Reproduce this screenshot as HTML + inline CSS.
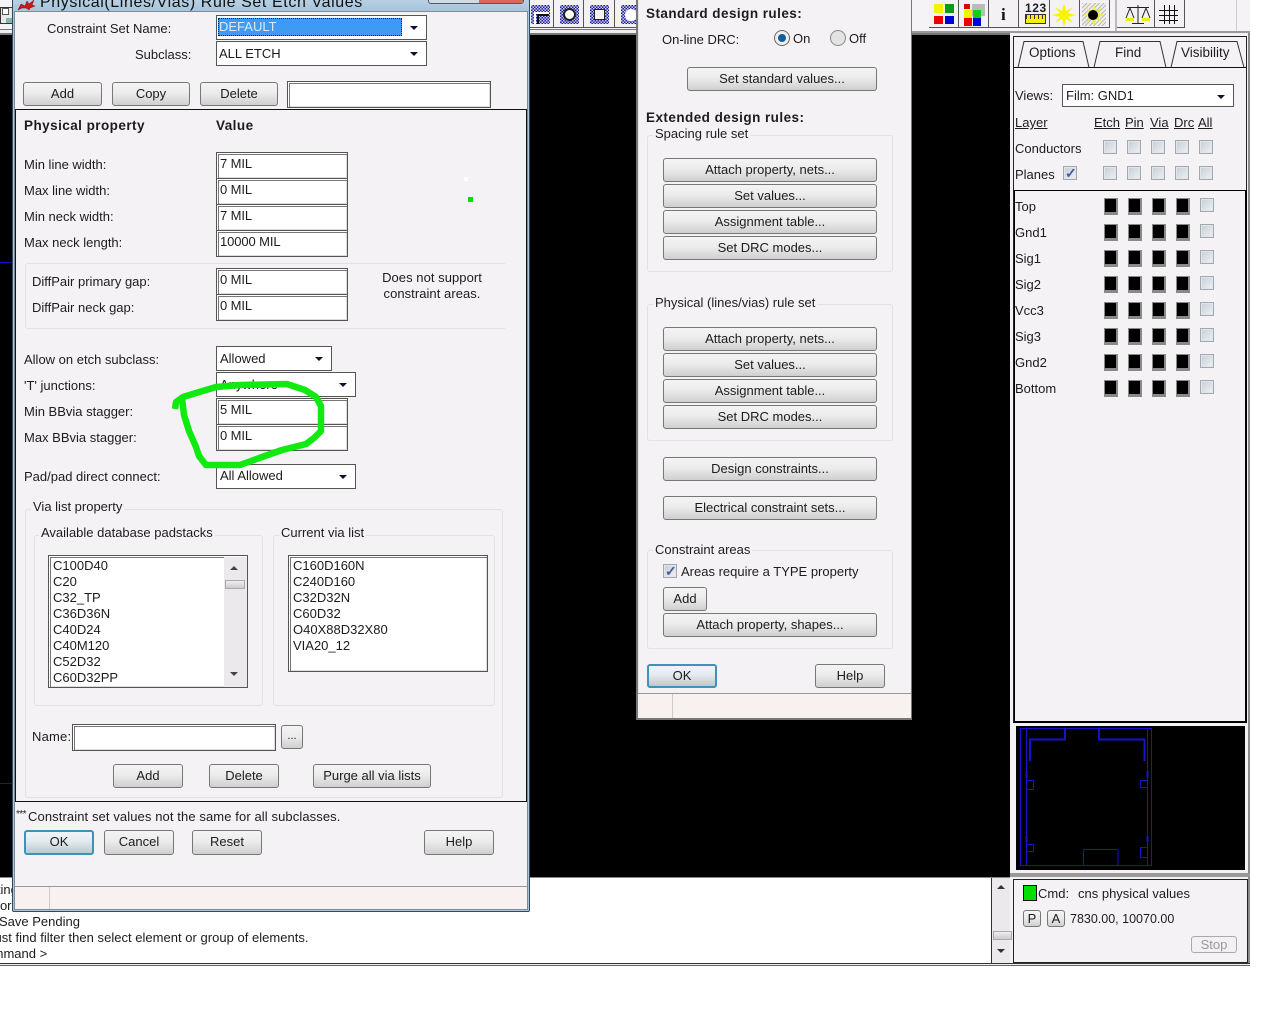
<!DOCTYPE html>
<html><head><meta charset="utf-8"><style>
*{box-sizing:border-box}
html,body{margin:0;padding:0;background:#fff}
body{width:1280px;height:1024px;overflow:hidden;position:relative;font:13px/16px "Liberation Sans",sans-serif;color:#1c1c1c}
div{position:absolute}
.t{white-space:nowrap;height:16px;margin-top:1px}
.bd{font-weight:bold;font-size:13.5px;letter-spacing:.45px}
.b{background:linear-gradient(#f4f4f4 0,#ececec 45%,#cfcfcf 100%);border:1px solid #777;border-radius:3px;text-align:center;line-height:21px;white-space:nowrap}
.ok{border:2px solid #3f93b8;line-height:19px;background:linear-gradient(#eef4f7 0,#e4eaee 45%,#bcc7cc 100%)}
.f{background:#fff;border:1px solid #555;box-shadow:inset 1px 1px 0 #fff,inset 2px 2px 0 #777,inset -1px -1px 0 #ddd;padding:2px 0 0 3px;line-height:18px;white-space:nowrap;letter-spacing:-.1px}
.c{background:#fff;border:1px solid #555;padding:2px 0 0 3px;line-height:18px;white-space:nowrap}
.c:after{content:"";position:absolute;right:8px;top:10px;border:4px solid transparent;border-top:4px solid #101030;border-bottom:0}
.g{border:1px solid #e3e1e5;border-radius:3px}
.l{background:#f5f2f6;padding:0 2px;white-space:nowrap;height:16px}
.k{width:14px;height:14px;background:linear-gradient(135deg,#c4cdd6,#eef2f6);border:1px solid #a3a8ad;box-shadow:inset 0 0 0 1px #e0e6ec}
.s{width:14px;height:17px;background:#000;border:1px solid #8a8a8a;border-bottom-width:3px;border-right-width:2px}
.u{text-decoration:underline}
.tb{top:0;height:28px;background:#f3f1f3;border-right:1px solid #555;border-bottom:1px solid #555}
.ch{background:#1c1c9c;background-image:repeating-conic-gradient(#2222a0 0 25%,#c9c9e8 0 50%);background-size:3px 3px}
svg{position:absolute}
</style></head><body>

<!-- toolbar strip + canvas -->
<div style="left:0;top:0;width:1010px;height:35px;background:#f5f3f5"></div>
<div style="left:0;top:7px;width:12px;height:17px;background:#e8e8e8;border:1px solid #333;border-right:0"></div>
<div style="left:2px;top:8px;width:7px;height:7px;background:#fff;border:1px solid #555"></div>
<div style="left:6px;top:18px;width:6px;height:5px;background:#7fb8b0"></div>
<div style="left:0;top:29px;width:1010px;height:6px;background:linear-gradient(#777 0,#777 1px,#eee 1px,#eee 4px,#777 4px,#777 6px)"></div>
<div style="left:0;top:35px;width:1010px;height:842px;background:#000"></div>
<div style="left:0;top:262px;width:13px;height:1px;background:#1010c0"></div>
<div style="left:0;top:783px;width:13px;height:1px;background:#1010c0"></div>

<!-- left toolbar -->
<div class="tb" style="left:524px;width:30px"></div>
<div class="ch" style="left:531px;top:5px;width:19px;height:19px"></div>
<div style="left:534px;top:12px;width:15px;height:12px;border:2px solid #fff;border-right:0;border-bottom:0"></div>
<div style="left:537px;top:14px;width:12px;height:10px;border:2px solid #111;border-right:0;border-bottom:0"></div>
<div class="tb" style="left:554px;width:30px"></div>
<div class="ch" style="left:560px;top:5px;width:19px;height:19px"></div>
<div style="left:563px;top:8px;width:13px;height:13px;border-radius:50%;background:#fff;border:2px solid #222"></div>
<div class="tb" style="left:584px;width:31px"></div>
<div class="ch" style="left:590px;top:5px;width:19px;height:19px"></div>
<div style="left:594px;top:9px;width:11px;height:11px;background:#f5f3f5;border:1px solid #222"></div>
<div class="tb" style="left:615px;width:25px"></div>
<div class="ch" style="left:621px;top:5px;width:19px;height:19px"></div>
<div style="left:625px;top:9px;width:12px;height:12px;border-radius:50%;background:#fff"></div>

<!-- right toolbar -->
<div style="left:912px;top:0;width:338px;height:33px;background:#f5f3f5"></div>
<div style="left:912px;top:31px;width:338px;height:2px;background:#9a9a9a"></div>
<div class="tb" style="left:929px;width:30px;border-left:0"></div>
<div style="left:934px;top:4px;width:9px;height:9px;background:#f4f400"></div>
<div style="left:945px;top:4px;width:9px;height:9px;background:#0b9b1b"></div>
<div style="left:934px;top:16px;width:9px;height:8px;background:#ee0000"></div>
<div style="left:945px;top:16px;width:9px;height:8px;background:#0000d8"></div>
<div class="tb" style="left:959px;width:30px"></div>
<div style="left:972px;top:4px;width:13px;height:12px;background:#bbb"></div>
<div style="left:964px;top:10px;width:8px;height:8px;background:#f4f400"></div>
<div style="left:973px;top:10px;width:8px;height:8px;background:#10d010"></div>
<div style="left:964px;top:18px;width:8px;height:8px;background:#ee0000"></div>
<div style="left:973px;top:18px;width:8px;height:8px;background:#0000d8"></div>
<div style="left:964px;top:4px;width:6px;height:5px;background:#e00000"></div>
<div class="tb" style="left:989px;width:30px"></div>
<div class="t" style="left:1001px;top:5px;font:bold 17px/18px 'Liberation Serif',serif;color:#111;height:18px">i</div>
<div class="tb" style="left:1019px;width:31px"></div>
<div class="t" style="left:1025px;top:1px;font:bold 12px/12px 'Liberation Sans',sans-serif;height:12px;letter-spacing:.6px">123</div>
<div style="left:1025px;top:14px;width:21px;height:10px;background:#f4f000;border:1px solid #333"></div>
<div style="left:1026px;top:15px;width:19px;height:4px;background:repeating-linear-gradient(90deg,#333 0 1px,transparent 1px 4px)"></div>
<div class="tb" style="left:1050px;width:30px"></div>
<svg style="left:1052px;top:3px" width="24" height="24" fill="#f8f400"><path d="M12 0L14 8L21 4L16 10L24 12L16 14L21 20L14 16L12 24L10 16L3 20L8 14L0 12L8 10L3 4L10 8Z"/></svg>
<div class="tb" style="left:1080px;width:30px"></div>
<div style="left:1082px;top:3px;width:24px;height:23px;background:repeating-linear-gradient(135deg,#bbb 0 1px,#eee 1px 3px)"></div>
<svg style="left:1082px;top:3px" width="24" height="24" fill="#f2ee40"><path d="M12 1L14 8L21 4L16 10L23 12L16 14L21 20L14 16L12 23L10 16L3 20L8 14L1 12L8 10L3 4L10 8Z"/></svg>
<div style="left:1088px;top:10px;width:10px;height:10px;border-radius:50%;background:#000"></div>
<div style="left:1115px;top:0;width:2px;height:31px;background:#bbb"></div>
<div class="tb" style="left:1117px;width:38px;border-left:0"></div>
<svg style="left:1125px;top:3px" width="26" height="24" fill="none" stroke="#222" stroke-width="1"><path d="M2 4.500H24M13 2V20M7 20.500H19M5 5L1 15M5 5L9 15M21 5L17 15M21 5L25 15"/><path d="M1 16.500H9M17 16.500H25" stroke="#ee0" stroke-width="3"/></svg>
<div class="tb" style="left:1155px;width:30px"></div>
<svg style="left:1158px;top:4px" width="22" height="22" stroke="#111" stroke-width="1"><path d="M6.500 1V20M11.500 1V20M16.500 1V20M1 6.500H20M1 11.500H20M1 16.500H20"/></svg>
<div style="left:1236px;top:0;width:1px;height:31px;background:#ccc"></div>

<!-- right panel -->
<div style="left:1010px;top:33px;width:240px;height:932px;background:#f3f1f3;border-right:2px solid #8a8a8a"></div>
<div style="left:1013px;top:36px;width:234px;height:687px;background:#f5f2f6;border:1px solid #222"></div>
<svg style="left:1014px;top:37px" width="233" height="34" fill="none" stroke="#111"><path d="M0 30.500H232"/><path d="M4 30.500L10 4.500H69L75 30.500M80 30.500L86 4.500H146L152 30.500M157 30.500L163 4.500H223L230 30.500" stroke="#333"/></svg>
<div class="t" style="left:1029px;top:44px;font-size:13.5px">Options</div>
<div class="t" style="left:1115px;top:44px;font-size:13.5px">Find</div>
<div class="t" style="left:1181px;top:44px;font-size:13.5px">Visibility</div>
<div class="t" style="left:1015px;top:87px">Views:</div>
<div class="c" style="left:1062px;top:84px;width:172px;height:23px;padding-left:3px">Film: GND1</div>
<div class="t u" style="left:1015px;top:114px">Layer</div>
<div class="t u" style="left:1094px;top:114px">Etch</div>
<div class="t u" style="left:1125px;top:114px">Pin</div>
<div class="t u" style="left:1150px;top:114px">Via</div>
<div class="t u" style="left:1174px;top:114px">Drc</div>
<div class="t u" style="left:1198px;top:114px">All</div>
<div class="t" style="left:1015px;top:140px">Conductors</div>
<div class="t" style="left:1015px;top:166px">Planes</div>
<div class="k" style="left:1063px;top:166px"></div>
<div class="t" style="left:1065px;top:164px;color:#4a5a9a;font-size:14px;font-weight:bold">✓</div>
<div class="k" style="left:1103px;top:140px"></div><div class="k" style="left:1127px;top:140px"></div><div class="k" style="left:1151px;top:140px"></div><div class="k" style="left:1175px;top:140px"></div><div class="k" style="left:1199px;top:140px"></div>
<div class="k" style="left:1103px;top:166px"></div><div class="k" style="left:1127px;top:166px"></div><div class="k" style="left:1151px;top:166px"></div><div class="k" style="left:1175px;top:166px"></div><div class="k" style="left:1199px;top:166px"></div>
<div style="left:1014px;top:190px;width:233px;height:533px;border:1px solid #000;border-width:1px 2px 2px 1px"></div>

<div class="t" style="left:1015px;top:198px">Top</div>
<div class="s" style="left:1104px;top:198px"></div><div class="s" style="left:1128px;top:198px"></div><div class="s" style="left:1152px;top:198px"></div><div class="s" style="left:1176px;top:198px"></div><div class="k" style="left:1200px;top:198px"></div>
<div class="t" style="left:1015px;top:224px">Gnd1</div>
<div class="s" style="left:1104px;top:224px"></div><div class="s" style="left:1128px;top:224px"></div><div class="s" style="left:1152px;top:224px"></div><div class="s" style="left:1176px;top:224px"></div><div class="k" style="left:1200px;top:224px"></div>
<div class="t" style="left:1015px;top:250px">Sig1</div>
<div class="s" style="left:1104px;top:250px"></div><div class="s" style="left:1128px;top:250px"></div><div class="s" style="left:1152px;top:250px"></div><div class="s" style="left:1176px;top:250px"></div><div class="k" style="left:1200px;top:250px"></div>
<div class="t" style="left:1015px;top:276px">Sig2</div>
<div class="s" style="left:1104px;top:276px"></div><div class="s" style="left:1128px;top:276px"></div><div class="s" style="left:1152px;top:276px"></div><div class="s" style="left:1176px;top:276px"></div><div class="k" style="left:1200px;top:276px"></div>
<div class="t" style="left:1015px;top:302px">Vcc3</div>
<div class="s" style="left:1104px;top:302px"></div><div class="s" style="left:1128px;top:302px"></div><div class="s" style="left:1152px;top:302px"></div><div class="s" style="left:1176px;top:302px"></div><div class="k" style="left:1200px;top:302px"></div>
<div class="t" style="left:1015px;top:328px">Sig3</div>
<div class="s" style="left:1104px;top:328px"></div><div class="s" style="left:1128px;top:328px"></div><div class="s" style="left:1152px;top:328px"></div><div class="s" style="left:1176px;top:328px"></div><div class="k" style="left:1200px;top:328px"></div>
<div class="t" style="left:1015px;top:354px">Gnd2</div>
<div class="s" style="left:1104px;top:354px"></div><div class="s" style="left:1128px;top:354px"></div><div class="s" style="left:1152px;top:354px"></div><div class="s" style="left:1176px;top:354px"></div><div class="k" style="left:1200px;top:354px"></div>
<div class="t" style="left:1015px;top:380px">Bottom</div>
<div class="s" style="left:1104px;top:380px"></div><div class="s" style="left:1128px;top:380px"></div><div class="s" style="left:1152px;top:380px"></div><div class="s" style="left:1176px;top:380px"></div><div class="k" style="left:1200px;top:380px"></div>

<!-- mini view -->
<div style="left:1016px;top:726px;width:229px;height:144px;background:#000"></div>
<svg style="left:1016px;top:724px" width="144" height="146" fill="none" stroke="#1414c8" stroke-width="1"><path d="M4.500 4.500H135.500V141.500H4.500ZM10.500 4.500V141.500M131.500 4.500V141.500"/><path d="M14 37V15.500H49V4M128.500 37V15.500H83V4" stroke-width="2"/><path d="M11 56.500H17.500V65.500H11M11 120.500H17.500V127.500H11M131 56.500H124.500V63.500H131M131 123.500H124.500V133.500H131M67.500 141V125.500H102V141"/><path d="M10.500 47V54M10.500 112V118M131.500 47V54M131.500 112V118" stroke-width="2"/></svg>

<!-- console -->
<div style="left:0;top:877px;width:1010px;height:1px;background:#888"></div>
<div style="left:0;top:878px;width:992px;height:85px;background:#fff;border-right:1px solid #333"></div>
<div class="t" style="left:-27px;top:881px">Routing</div>
<div class="t" style="left:-8px;top:897px">For</div>
<div class="t" style="left:-1px;top:913px">Save Pending</div>
<div class="t" style="left:-12px;top:929px;letter-spacing:.02px">Just find filter then select element or group of elements.</div>
<div class="t" style="left:-24px;top:945px">Command &gt;</div>
<div style="left:992px;top:878px;width:18px;height:85px;background:#ece9ec"></div>
<div style="left:997px;top:885px;border:4px solid transparent;border-bottom:4px solid #333;border-top:0"></div>
<div style="left:993px;top:931px;width:19px;height:9px;background:linear-gradient(#eee,#ccc);border:1px solid #aaa"></div>
<div style="left:997px;top:949px;border:4px solid transparent;border-top:4px solid #333;border-bottom:0"></div>
<div style="left:0;top:963px;width:1250px;height:3px;background:linear-gradient(#333 0,#333 1px,#eee 1px,#eee 2px,#666 2px)"></div>

<!-- status box -->
<div style="left:1010px;top:873px;width:240px;height:4px;background:#999"></div>
<div style="left:1013px;top:879px;width:235px;height:84px;background:#f5f2f6;border:1px solid #222"></div>
<div style="left:1023px;top:885px;width:14px;height:16px;background:#00e000;border:1px solid #111"></div>
<div class="t" style="left:1038px;top:885px">Cmd:</div>
<div class="t" style="left:1078px;top:885px">cns physical values</div>
<div class="b" style="left:1023px;top:910px;width:18px;height:17px;line-height:15px">P</div>
<div class="b" style="left:1047px;top:910px;width:18px;height:17px;line-height:15px">A</div>
<div class="t" style="left:1070px;top:910px;font-size:12.5px">7830.00, 10070.00</div>
<div class="b" style="left:1191px;top:936px;width:46px;height:17px;line-height:15px;color:#999;background:#f2f0f2;border-color:#aaa">Stop</div>

<!-- dialog 1 -->
<div style="left:12px;top:-4px;width:518px;height:916px;background:linear-gradient(#bcd3e6,#a9c6dc 12px);border:1px solid #2c4a62;border-radius:0 0 2px 2px"></div>
<div style="left:14px;top:11px;width:514px;height:899px;background:#f5f2f6;border:1px solid #7f8a92"></div>
<svg style="left:17px;top:0" width="19" height="11"><path d="M1 10L4 4L8 6L10 1L12 4L17 0L15 5L18 6L13 8L12 10L9 8L5 8Z" fill="#d01616" stroke="#701010" stroke-width=".5"/></svg>
<div class="t" style="left:40px;top:-6px;font-size:16px;line-height:16px;letter-spacing:.6px;color:#101010">Physical(Lines/Vias) Rule Set Etch Values</div>
<div style="left:428px;top:-8px;width:96px;height:12px;background:#cfdce6;border:1px solid #556;border-radius:3px"></div>
<div style="left:479px;top:-7px;width:44px;height:10px;background:#d86a5a"></div>

<div class="t" style="left:47px;top:20px">Constraint Set Name:</div>
<div class="c" style="left:216px;top:15px;width:211px;height:25px"></div>
<div style="left:218px;top:18px;width:184px;height:18px;background:#3d9bf2;color:#dfe9f5;border:1px dotted #123;padding-left:0;line-height:16px">DEFAULT</div>
<div class="t" style="left:135px;top:46px">Subclass:</div>
<div class="c" style="left:216px;top:41px;width:211px;height:25px;padding:3px 0 0 2px">ALL ETCH</div>
<div class="b" style="left:23px;top:82px;width:79px;height:24px">Add</div>
<div class="b" style="left:112px;top:82px;width:78px;height:24px">Copy</div>
<div class="b" style="left:200px;top:82px;width:78px;height:24px">Delete</div>
<div class="f" style="left:287px;top:81px;width:204px;height:27px"></div>

<div style="left:15px;top:109px;width:512px;height:693px;border:1px solid #111"></div>
<div class="t bd" style="left:24px;top:117px">Physical property</div>
<div class="t bd" style="left:216px;top:117px">Value</div>

<div class="t" style="left:24px;top:156px">Min line width:</div>
<div class="f" style="left:216px;top:152px;width:132px;height:27px">7 MIL</div>
<div class="t" style="left:24px;top:182px">Max line width:</div>
<div class="f" style="left:216px;top:178px;width:132px;height:27px">0 MIL</div>
<div class="t" style="left:24px;top:208px">Min neck width:</div>
<div class="f" style="left:216px;top:204px;width:132px;height:27px">7 MIL</div>
<div class="t" style="left:24px;top:234px">Max neck length:</div>
<div class="f" style="left:216px;top:230px;width:132px;height:27px">10000 MIL</div>
<div style="left:468px;top:197px;width:5px;height:5px;background:#00e000"></div>
<div style="left:464px;top:177px;width:4px;height:4px;background:#fff"></div>

<div style="left:25px;top:263px;width:480px;height:66px;border:1px solid #e3e1e5;border-right:0;border-radius:3px 0 0 3px"></div>
<div class="t" style="left:32px;top:273px">DiffPair primary gap:</div>
<div class="f" style="left:216px;top:268px;width:132px;height:27px">0 MIL</div>
<div class="t" style="left:32px;top:299px">DiffPair neck gap:</div>
<div class="f" style="left:216px;top:294px;width:132px;height:27px">0 MIL</div>
<div class="t" style="left:352px;top:269px;width:160px;text-align:center;letter-spacing:.05px">Does not support</div>
<div class="t" style="left:352px;top:285px;width:160px;text-align:center;letter-spacing:.05px">constraint areas.</div>

<div class="t" style="left:24px;top:351px">Allow on etch subclass:</div>
<div class="c" style="left:216px;top:346px;width:116px;height:25px;padding-top:3px">Allowed</div>
<div class="t" style="left:24px;top:377px">'T' junctions:</div>
<div class="c" style="left:216px;top:372px;width:140px;height:25px;padding-top:3px">Anywhere</div>
<div class="t" style="left:24px;top:403px">Min BBvia stagger:</div>
<div class="f" style="left:216px;top:398px;width:132px;height:27px">5 MIL</div>
<div class="t" style="left:24px;top:429px">Max BBvia stagger:</div>
<div class="f" style="left:216px;top:424px;width:132px;height:27px">0 MIL</div>
<div class="t" style="left:24px;top:468px">Pad/pad direct connect:</div>
<div class="c" style="left:216px;top:464px;width:140px;height:25px">All Allowed</div>

<div class="g" style="left:25px;top:509px;width:478px;height:289px"></div>
<div class="t l" style="left:31px;top:498px">Via list property</div>
<div class="g" style="left:34px;top:535px;width:229px;height:171px"></div>
<div class="t l" style="left:39px;top:524px">Available database padstacks</div>
<div class="g" style="left:273px;top:535px;width:222px;height:171px"></div>
<div class="t l" style="left:279px;top:524px">Current via list</div>

<div class="f" style="left:48px;top:555px;width:200px;height:133px;overflow:hidden;padding:2px 0 0 4px;line-height:16px;letter-spacing:0">C100D40<br>C20<br>C32_TP<br>C36D36N<br>C40D24<br>C40M120<br>C52D32<br>C60D32PP</div>
<div style="left:224px;top:557px;width:23px;height:130px;background:#ece9ec"></div>
<div style="left:230px;top:566px;border:4px solid transparent;border-bottom:4px solid #444;border-top:0"></div>
<div style="left:225px;top:580px;width:20px;height:9px;background:linear-gradient(#eee,#ccc);border:1px solid #aaa"></div>
<div style="left:230px;top:672px;border:4px solid transparent;border-top:4px solid #444;border-bottom:0"></div>
<div class="f" style="left:288px;top:555px;width:200px;height:117px;padding:2px 0 0 4px;line-height:16px;letter-spacing:0">C160D160N<br>C240D160<br>C32D32N<br>C60D32<br>O40X88D32X80<br>VIA20_12</div>

<div class="t" style="left:32px;top:728px;letter-spacing:.2px">Name:</div>
<div class="f" style="left:72px;top:724px;width:204px;height:27px"></div>
<div class="b" style="left:281px;top:725px;width:22px;height:24px;font-size:11px">...</div>
<div class="b" style="left:113px;top:764px;width:70px;height:24px">Add</div>
<div class="b" style="left:209px;top:764px;width:70px;height:24px">Delete</div>
<div class="b" style="left:313px;top:764px;width:118px;height:24px">Purge all via lists</div>

<div class="t" style="left:16px;top:806px;font-size:10px;letter-spacing:-.6px">***</div>
<div class="t" style="left:28px;top:808px;letter-spacing:.1px">Constraint set values not the same for all subclasses.</div>
<div class="b ok" style="left:24px;top:830px;width:70px;height:25px">OK</div>
<div class="b" style="left:104px;top:830px;width:70px;height:25px">Cancel</div>
<div class="b" style="left:192px;top:830px;width:70px;height:25px">Reset</div>
<div class="b" style="left:424px;top:830px;width:70px;height:25px">Help</div>

<div style="left:15px;top:886px;width:512px;height:23px;background:#f9f0f0;border-top:1px solid #999"></div>
<div style="left:49px;top:887px;width:1px;height:22px;background:#ccc"></div>

<!-- dialog 2 -->
<div style="left:636px;top:-4px;width:276px;height:724px;background:#f5f2f6;border:1px solid #777;border-width:0 1px 2px 2px;box-shadow:inset 1px 0 0 #e5e5e5"></div>
<div class="t bd" style="left:646px;top:5px">Standard design rules:</div>
<div class="t" style="left:662px;top:31px">On-line DRC:</div>
<div style="left:774px;top:30px;width:16px;height:16px;border-radius:50%;background:#eee;border:1px solid #666"></div>
<div style="left:778px;top:34px;width:8px;height:8px;border-radius:50%;background:#0f5f9c"></div>
<div class="t" style="left:793px;top:30px">On</div>
<div style="left:830px;top:30px;width:16px;height:16px;border-radius:50%;background:#e3e3e3;border:1px solid #888"></div>
<div class="t" style="left:849px;top:30px">Off</div>
<div class="b" style="left:687px;top:67px;width:190px;height:24px">Set standard values...</div>
<div class="t bd" style="left:646px;top:109px">Extended design rules:</div>

<div class="g" style="left:647px;top:135px;width:246px;height:137px"></div>
<div class="t l" style="left:653px;top:125px">Spacing rule set</div>
<div class="b" style="left:663px;top:158px;width:214px;height:24px">Attach property, nets...</div>
<div class="b" style="left:663px;top:184px;width:214px;height:24px">Set values...</div>
<div class="b" style="left:663px;top:210px;width:214px;height:24px">Assignment table...</div>
<div class="b" style="left:663px;top:236px;width:214px;height:24px">Set DRC modes...</div>

<div class="g" style="left:647px;top:304px;width:246px;height:137px"></div>
<div class="t l" style="left:653px;top:294px">Physical (lines/vias) rule set</div>
<div class="b" style="left:663px;top:327px;width:214px;height:24px">Attach property, nets...</div>
<div class="b" style="left:663px;top:353px;width:214px;height:24px">Set values...</div>
<div class="b" style="left:663px;top:379px;width:214px;height:24px">Assignment table...</div>
<div class="b" style="left:663px;top:405px;width:214px;height:24px">Set DRC modes...</div>

<div class="b" style="left:663px;top:457px;width:214px;height:24px">Design constraints...</div>
<div class="b" style="left:663px;top:496px;width:214px;height:24px">Electrical constraint sets...</div>

<div class="g" style="left:647px;top:550px;width:246px;height:99px"></div>
<div class="t l" style="left:653px;top:541px">Constraint areas</div>
<div class="k" style="left:663px;top:564px"></div>
<div class="t" style="left:665px;top:562px;color:#4a5a9a;font-size:14px;font-weight:bold">✓</div>
<div class="t" style="left:681px;top:563px">Areas require a TYPE property</div>
<div class="b" style="left:663px;top:587px;width:44px;height:24px">Add</div>
<div class="b" style="left:663px;top:613px;width:214px;height:24px">Attach property, shapes...</div>
<div class="b ok" style="left:647px;top:664px;width:70px;height:24px">OK</div>
<div class="b" style="left:815px;top:664px;width:70px;height:24px">Help</div>
<div style="left:638px;top:693px;width:273px;height:25px;background:#f9f0f0;border-top:1px solid #999"></div>
<div style="left:672px;top:694px;width:1px;height:24px;background:#ccc"></div>

<!-- green annotation -->
<svg style="left:0;top:0" width="1280" height="1024" fill="none"><path d="M175 409L176 402L183 397L196 393L216 387L240 385L287 384L305 390L316 397L321 406L321 431L314 438L306 444L282 450L262 457L240 465L206 465L199 456L196 447L189 431L184 415L182 398" stroke="#10ea10" stroke-width="6.5" stroke-linejoin="round" stroke-linecap="butt"/></svg>
</body></html>
